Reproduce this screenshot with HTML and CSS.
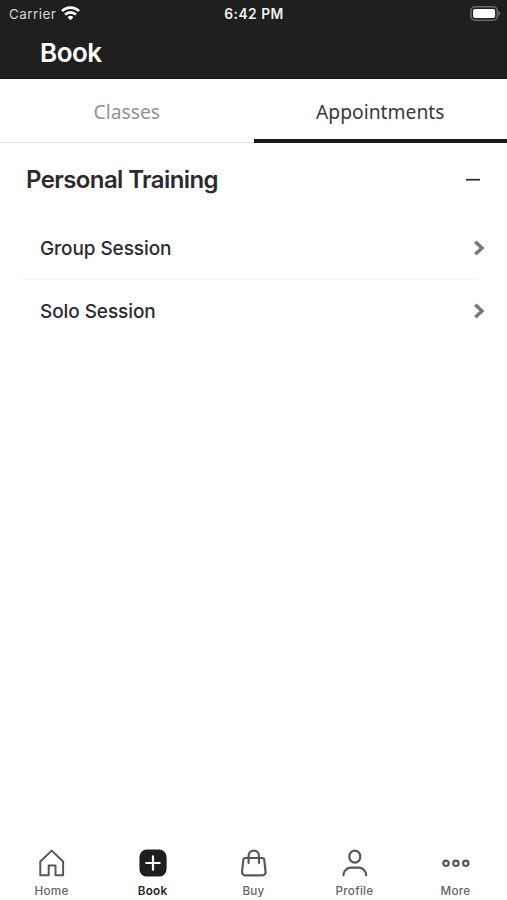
FILE: index.html
```html
<!DOCTYPE html>
<html lang="en">
<head>
<meta charset="utf-8">
<title>Book</title>
<link rel="stylesheet" href="styles.css">
</head>
<body>
<div class="app">
  <header class="header">
    <div class="status">
      <div class="status-left">
        <span class="carrier">Carrier</span>
        <svg class="wifi" viewBox="0 0 19 15" width="19" height="15" fill="none" stroke="#fff" stroke-width="2.7">
          <path d="M1 5.100a12 12 0 0 1 17 0"/>
          <path d="M4.100 8.600a7.600 7.600 0 0 1 10.800 0"/>
          <path d="M9.500 14.200 6.600 11.300a4.100 4.100 0 0 1 5.800 0z" fill="#fff" stroke="none"/>
        </svg>
      </div>
      <span class="time">6:42 PM</span>
      <svg class="battery" viewBox="0 0 31 15" width="31" height="15">
        <rect x="0.900" y="0.800" width="26.400" height="13.400" rx="4" fill="#1f1f1f" stroke="#686868" stroke-width="1.600"/>
        <rect x="3.100" y="3" width="22" height="9" rx="1.800" fill="#fff"/>
        <path d="M28.400 5v5c1.200-.5 2-1.300 2-2.500s-.8-2-2-2.500z" fill="#686868"/>
      </svg>
    </div>
    <h1 class="title">Book</h1>
  </header>
  <nav class="tabs">
    <a class="tab">Classes</a>
    <a class="tab tab-active">Appointments</a>
  </nav>
  <main class="content">
    <div class="section">
      <h2 class="section-title">Personal Training</h2>
      <svg viewBox="0 0 14 4" width="14" height="4"><path d="M0 1.700h14" stroke="#2c2c2e" stroke-width="1.700"/></svg>
    </div>
    <ul class="list">
      <li class="row">
        <span>Group Session</span>
        <svg class="chevron" viewBox="0 0 12 16" width="12" height="16"><path d="M2.300 1.700 9 8l-6.700 6.300" fill="none" stroke="#777" stroke-width="3.500"/></svg>
      </li>
      <li class="row">
        <span>Solo Session</span>
        <svg class="chevron" viewBox="0 0 12 16" width="12" height="16"><path d="M2.300 1.700 9 8l-6.700 6.300" fill="none" stroke="#777" stroke-width="3.500"/></svg>
      </li>
    </ul>
  </main>
  <nav class="tabbar">
    <a class="item">
      <svg viewBox="0 0 28 28" width="28" height="28" fill="none" stroke="#54585c" stroke-width="2" stroke-linejoin="round"><path d="M2.300 12.500 13.700 1.600l11.400 10.900v13.700h-7.600v-9.700h-6.800v9.700H2.300z"/></svg>
      <span>Home</span>
    </a>
    <a class="item item-active">
      <svg viewBox="0 0 28 28" width="28" height="28"><rect x=".4" y=".6" width="27.200" height="27" rx="7.500" fill="#1d1e20"/><path d="M14 7.300v13.400M7.300 14h13.400" stroke="#fff" stroke-width="2.200" stroke-linecap="round"/></svg>
      <span>Book</span>
    </a>
    <a class="item">
      <svg viewBox="0 0 28 28" width="28" height="28" fill="none" stroke="#54585c" stroke-width="2.200" stroke-linecap="round"><path d="M5 9h17.600a1.600 1.600 0 0 1 1.600 1.300l1.400 12.700a3 3 0 0 1-3 3.300H5a3 3 0 0 1-3-3.300l1.400-12.700A1.600 1.600 0 0 1 5 9z"/><path d="M8.600 14V6.800a5.200 5.200 0 0 1 10.400 0V14"/></svg>
      <span>Buy</span>
    </a>
    <a class="item">
      <svg viewBox="0 0 28 28" width="28" height="28" fill="none" stroke="#54585c" stroke-width="2.200" stroke-linecap="round"><rect x="8.400" y="1.600" width="10.800" height="12" rx="5.400"/><path d="M2.500 26.300c.1-4.800 3.500-7.600 7.500-7.600h7.600c4 0 7.400 2.800 7.500 7.600"/></svg>
      <span>Profile</span>
    </a>
    <a class="item">
      <svg viewBox="0 0 28 28" width="28" height="28" fill="none" stroke="#54585c" stroke-width="2.200"><circle cx="4" cy="14.300" r="2.700"/><circle cx="13.900" cy="14.300" r="2.700"/><circle cx="23.800" cy="14.300" r="2.700"/></svg>
      <span>More</span>
    </a>
  </nav>
</div>
</body>
</html>
```
FILE: styles.css
```css
* {
  box-sizing: border-box;
}

body {
  margin: 0;
  background: #fff;
  color: #2b2b2d;
  font-family: Inter, "Liberation Sans", sans-serif;
}

.app {
  display: flex;
  flex-direction: column;
  height: 900px;
}

.header {
  height: 79px;
  background: #1f1f1f;
  border-bottom: 1px solid #151515;
  color: #fff;
}

.status {
  display: grid;
  grid-template-columns: 1fr auto 1fr;
  align-items: center;
  height: 27px;
  padding: 0 6px 0 9px;
}

.status-left {
  display: flex;
  align-items: center;
  gap: 5px;
}

.carrier {
  font-size: 13.5px;
  letter-spacing: 0.45px;
  color: #d4d4d4;
}

.time {
  margin-right: 2px;
  font-size: 13.8px;
  font-weight: 600;
  letter-spacing: 0.5px;
  color: #f2f2f2;
}

.battery {
  justify-self: end;
}

.title {
  margin: 10px 0 0 40px;
  font-size: 26px;
  font-weight: 600;
  line-height: 32px;
  letter-spacing: -0.5px;
}

.tabs {
  display: flex;
  height: 64px;
}

.tab {
  display: flex;
  flex: 1;
  align-items: center;
  justify-content: center;
  padding-top: 1px;
  border-bottom: 1px solid #e4e4e4;
  color: #939396;
  font-family: "Noto Sans", "Open Sans", sans-serif;
  font-size: 19.3px;
}

.tab-active {
  border-bottom: 4px solid #1a1a1a;
  padding-top: 4px;
  color: #39393b;
}

.content {
  flex: 1;
}

.section {
  display: flex;
  align-items: center;
  justify-content: space-between;
  height: 74px;
  padding: 0 27px 0 26px;
}

.section-title {
  margin: 0 0 2px;
  font-size: 24px;
  font-weight: 600;
  letter-spacing: -0.6px;
}

.list {
  margin: 0;
  padding: 0 0 0 21px;
  list-style: none;
}

.row {
  display: flex;
  align-items: center;
  justify-content: space-between;
  height: 63px;
  padding: 0 22px 0 19px;
  font-size: 19px;
  font-weight: 500;
  letter-spacing: -0.08px;
}

.chevron {
  margin-bottom: 1px;
}

.row:first-child {
  background: linear-gradient(#f1f1f1, #f1f1f1) left bottom / 456px 1px no-repeat;
}

.tabbar {
  display: flex;
  height: 60px;
  padding: 9px 1px 0;
}

.item {
  display: flex;
  flex: 1;
  flex-direction: column;
  align-items: center;
  gap: 6px;
  color: #626468;
  font-size: 11.7px;
  font-weight: 500;
  line-height: 16px;
  letter-spacing: 0.25px;
}

.item-active {
  color: #252527;
  font-weight: 600;
}
```
